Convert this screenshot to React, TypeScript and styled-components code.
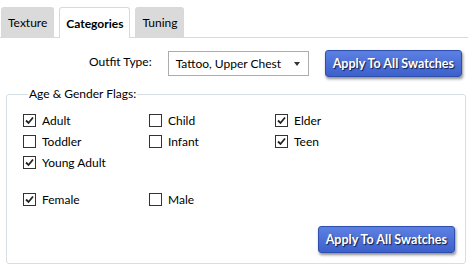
import React from 'react';
import styled, { createGlobalStyle } from 'styled-components';

const GlobalStyle = createGlobalStyle`
  html, body {
    margin: 0;
    padding: 0;
    background: #ffffff;
  }
  body {
    font-family: "Segoe UI", Lato, "Liberation Sans", sans-serif;
    font-size: 12px;
    color: #000000;
  }
`;

const Page = styled.div`
  width: 468px;
  height: 266px;
  display: flex;
  flex-direction: column;
  overflow: hidden;
`;

const TabStrip = styled.div`
  display: flex;
  align-items: flex-end;
  gap: 5px;
  height: 37px;
  padding-left: 1px;
  border-bottom: 1px solid #d9d9d9;
`;

const Tab = styled.div<{ $active?: boolean }>`
  box-sizing: border-box;
  padding: 0 6px;
  display: flex;
  align-items: center;
  border: 1px solid #d9d9d9;
  border-bottom: none;
  border-radius: 3px 3px 0 0;
  background: ${({ $active }) => ($active ? '#ffffff' : '#dadada')};
  font-weight: ${({ $active }) => ($active ? 700 : 400)};
  margin-bottom: ${({ $active }) => ($active ? '-1px' : '0')};
  height: ${({ $active }) => ($active ? '31px' : '30px')};
`;

const TopRow = styled.div`
  display: flex;
  align-items: center;
  justify-content: flex-end;
  gap: 16px;
  padding: 12px 6px 0 0;
`;

const FieldLabel = styled.span`
  margin-top: -4px;
`;

const Select = styled.div`
  width: 141px;
  height: 25px;
  box-sizing: border-box;
  border: 1px solid #acacac;
  display: flex;
  align-items: center;
  justify-content: space-between;
  padding: 0 8px 0 7px;
  background: #ffffff;
`;

const Arrow = styled.span`
  width: 0;
  height: 0;
  border-left: 3.5px solid transparent;
  border-right: 3.5px solid transparent;
  border-top: 4px solid #333333;
`;

const ApplyButton = styled.button`
  height: 27px;
  padding: 0 7px;
  border: 1px solid #2f4fae;
  border-radius: 3px;
  background: linear-gradient(#5c80e2, #3d60cc);
  color: #ffffff;
  font-family: inherit;
  font-size: 12.5px;
  font-weight: 700;
  text-shadow: 1px 1px 1px rgba(0, 0, 20, 0.75);
  box-shadow: 1px 2px 3px rgba(0, 0, 0, 0.45);
  cursor: pointer;
`;

const Group = styled.fieldset`
  margin: 10px 2px 2px 6px;
  padding: 8px 10px 10px 16px;
  border: 1px solid #d5dfe5;
  border-radius: 3px;
  flex: 1;
  display: flex;
  flex-direction: column;
  min-height: 0;
`;

const Legend = styled.legend`
  padding: 0 1px;
  margin-left: 5px;
  line-height: 14px;
`;

const FlagGrid = styled.div`
  display: grid;
  grid-template-columns: 126px 126px 126px;
  grid-template-rows: 22px 21px 21px 16px 21px;
`;

const Spacer = styled.div`
  grid-column: 1 / -1;
`;

const Flag = styled.label`
  display: flex;
  align-items: center;
  gap: 6px;
`;

const Box = styled.span`
  width: 13px;
  height: 13px;
  box-sizing: border-box;
  border: 1px solid #333333;
  background: #ffffff;
  display: flex;
  align-items: center;
  justify-content: center;
`;

const Footer = styled.div`
  margin-top: auto;
  display: flex;
  justify-content: flex-end;
`;

const Check: React.FC<{ checked: boolean }> = ({ checked }) => (
  <Box>
    {checked && (
      <svg width="9" height="9" viewBox="0 0 9 9">
        <path d="M1 4.5 L3.5 7 L8 1.5" fill="none" stroke="#222" strokeWidth="1.8" />
      </svg>
    )}
  </Box>
);

type FlagItem = { name: string; checked: boolean } | null;

const rows: FlagItem[][] = [
  [{ name: 'Adult', checked: true }, { name: 'Child', checked: false }, { name: 'Elder', checked: true }],
  [{ name: 'Toddler', checked: false }, { name: 'Infant', checked: false }, { name: 'Teen', checked: true }],
  [{ name: 'Young Adult', checked: true }, null, null],
];

const genders: FlagItem[] = [
  { name: 'Female', checked: true },
  { name: 'Male', checked: false },
  null,
];

const renderItem = (item: FlagItem, key: string) =>
  item ? (
    <Flag key={key}>
      <Check checked={item.checked} />
      <span>{item.name}</span>
    </Flag>
  ) : (
    <div key={key} />
  );

export default function App() {
  return (
    <Page>
      <GlobalStyle />
      <TabStrip>
        <Tab>Texture</Tab>
        <Tab $active>Categories</Tab>
        <Tab>Tuning</Tab>
      </TabStrip>
      <TopRow>
        <FieldLabel>Outfit Type:</FieldLabel>
        <Select>
          <span>Tattoo, Upper Chest</span>
          <Arrow />
        </Select>
        <ApplyButton type="button">Apply To All Swatches</ApplyButton>
      </TopRow>
      <Group>
        <Legend>Age &amp; Gender Flags:</Legend>
        <FlagGrid>
          {rows.map((row, r) => row.map((item, c) => renderItem(item, `r${r}c${c}`)))}
          <Spacer />
          {genders.map((item, c) => renderItem(item, `g${c}`))}
        </FlagGrid>
        <Footer>
          <ApplyButton type="button">Apply To All Swatches</ApplyButton>
        </Footer>
      </Group>
    </Page>
  );
}
